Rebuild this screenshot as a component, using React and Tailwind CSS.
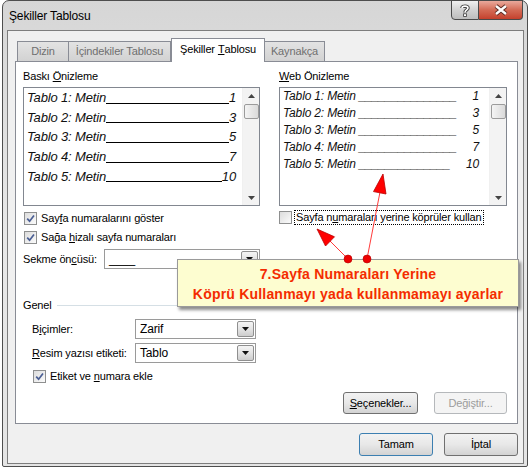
import React from 'react';

const Check = ({ checked }) => (
  <span className="w-[13px] h-[13px] border border-[#8e8f8f] bg-white flex items-center justify-center shrink-0">
    <span className="w-[11px] h-[11px] bg-gradient-to-br from-[#dcdcdc] to-[#fbfbfb] flex items-center justify-center">
      {checked && (
        <svg width="9" height="9" viewBox="0 0 9 9">
          <path d="M1.2 4.6 L3.6 7.2 L8 1.4" stroke="#4b5f94" strokeWidth="1.7" fill="none" />
        </svg>
      )}
    </span>
  </span>
);

const Select = ({ value, className }) => (
  <div className={`h-[20px] border border-[#9a9a9a] bg-white flex items-stretch ${className}`}>
    <div className="flex-1 pl-[4px] flex items-center text-[12px] text-black">{value}</div>
    <div className="w-[17px] m-[1px] border border-[#8f8f8f] rounded-[2px] bg-gradient-to-b from-[#f4f4f4] via-[#e4e4e4] to-[#cdcdcd] flex items-center justify-center">
      <svg width="7" height="4" viewBox="0 0 7 4">
        <path d="M0 0 H7 L3.5 4 Z" fill="#111" />
      </svg>
    </div>
  </div>
);

const ScrollBar = () => (
  <div className="w-[17px] bg-[#f3f3f3] border-l border-[#f0f0f0] flex flex-col items-center">
    <div className="h-[15px] w-full flex items-center justify-center">
      <svg width="7" height="4" viewBox="0 0 7 4">
        <path d="M0 4 H7 L3.5 0 Z" fill="#444" />
      </svg>
    </div>
    <div className="w-[15px] h-[15px] mt-[1px] border border-[#9b9b9b] rounded-[2px] bg-gradient-to-r from-[#f4f4f4] to-[#dadada]" />
    <div className="flex-1" />
    <div className="h-[15px] w-full flex items-center justify-center">
      <svg width="7" height="4" viewBox="0 0 7 4">
        <path d="M0 0 H7 L3.5 4 Z" fill="#444" />
      </svg>
    </div>
  </div>
);

const Btn = ({ children, className = '', disabled, primary }) => (
  <div
    className={`h-[22px] rounded-[3px] border flex items-center justify-center text-[11px] ${
      disabled
        ? 'border-[#b5b8bb] bg-[#f4f4f4] text-[#9c9c9c]'
        : primary
        ? 'border-[#3c7fb1] bg-gradient-to-b from-[#f2f2f2] via-[#e8e8e8] to-[#d3d3d3] text-black'
        : 'border-[#707070] bg-gradient-to-b from-[#f2f2f2] via-[#e8e8e8] to-[#d3d3d3] text-black'
    } ${className}`}
  >
    {children}
  </div>
);

const printRows = [
  ['Tablo 1: Metin', '1'],
  ['Tablo 2: Metin', '3'],
  ['Tablo 3: Metin', '5'],
  ['Tablo 4: Metin', '7'],
  ['Tablo 5: Metin', '10'],
];

const webRows = [
  ['Tablo 1: Metin _______________', '1'],
  ['Tablo 2: Metin _______________', '3'],
  ['Tablo 3: Metin _______________', '5'],
  ['Tablo 4: Metin _______________', '7'],
  ['Tablo 5: Metin ______________', '10'],
];

const Tab = ({ children, className = '' }) => (
  <div className={`h-[20px] border border-b-0 border-[#898c95] bg-gradient-to-b from-[#e3e3e3] to-[#d2d2d2] text-[#6f6f6f] text-[11px] flex items-center justify-center ${className}`}>
    {children}
  </div>
);

export default function App() {
  return (
    <div className="w-[530px] h-[470px] relative bg-white overflow-hidden pl-[2px] font-['Liberation_Sans',Arial,sans-serif] tracking-[-0.15px] text-black">
      {/* window */}
      <div className="w-[526px] h-[467px] border border-[#4e4e4e] rounded-t-[7px] rounded-b-[2px] bg-gradient-to-b from-[#d6d6d6] via-[#e8e8e8] to-[#e4e4e4] flex flex-col">
        {/* title bar */}
        <div className="h-[29px] flex items-start">
          <div className="pl-[6px] pt-[8px] text-[12px] leading-[14px] text-black">Şekiller Tablosu</div>
          <div className="flex-1" />
          <div className="flex -mt-px mr-[4px]">
            <div className="w-[28px] h-[20px] border border-[#4a4a4a] rounded-bl-[4px] bg-gradient-to-b from-[#f0f0f0] via-[#d2d2d2] to-[#bdbdbd] flex items-center justify-center">
              <svg width="12" height="13" viewBox="0 0 12 13">
                <path d="M3 4 C3 1.5 9 1.5 9 4 C9 6 6 6 6 8.5" stroke="#3a3a3a" strokeWidth="3.4" fill="none" />
                <path d="M3 4 C3 1.5 9 1.5 9 4 C9 6 6 6 6 8.5" stroke="#fff" strokeWidth="1.6" fill="none" />
                <rect x="4.6" y="9.8" width="2.8" height="2.6" fill="#fff" stroke="#3a3a3a" strokeWidth="0.8" />
              </svg>
            </div>
            <div className="w-[44px] h-[20px] border border-l-0 border-[#4a4a4a] rounded-br-[4px] bg-gradient-to-b from-[#e9a99c] via-[#d36a55] to-[#c4402c] flex items-center justify-center">
              <svg width="16" height="12" viewBox="0 0 16 12">
                <path d="M3 2 L13 10 M13 2 L3 10" stroke="#5a2a22" strokeWidth="4.2" />
                <path d="M3 2 L13 10 M13 2 L3 10" stroke="#fff" strokeWidth="2.4" />
              </svg>
            </div>
          </div>
        </div>

        {/* content */}
        <div className="ml-[4px] w-[517px] h-[434px] border border-[#7d7d7d] bg-[#f0f0f0] pt-[7px] pl-[7px]">
          <div className="relative z-10 flex items-end h-[23px] pl-[2px]">
            <Tab className="w-[52px]">Dizin</Tab>
            <Tab className="w-[102px] border-l-0">İçindekiler Tablosu</Tab>
            <div className="w-[94px] h-[24px] -mb-px border border-b-0 border-[#898c95] bg-white text-[11px] flex items-center justify-center pb-[2px]">
              Şekiller <span className="underline ml-[3px]">T</span>ablosu
            </div>
            <Tab className="w-[60px] border-l-0">Kaynakça</Tab>
          </div>

          {/* panel */}
          <div className="w-[503px] h-[363px] border border-[#898c95] bg-white flex flex-col text-[11px]">
            <div className="flex pl-[7px]">
              {/* left column */}
              <div className="w-[237px] flex flex-col">
                <div className="mt-[7px] h-[14px] leading-[14px]">
                  Baskı <span className="underline">Ö</span>nizleme
                </div>
                <div className="mt-[4px] h-[119px] border border-[#828790] flex">
                  <div className="flex-1 pl-[3px] pr-[6px] font-['Liberation_Sans',Arial,sans-serif] italic text-[13px] text-[#111]">
                    {printRows.map(([t, n]) => (
                      <div key={t} className="h-[19.7px] leading-[20px] flex">
                        <span>{t}</span>
                        <span className="flex-1 h-px bg-black self-end mb-[4px]" />
                        <span>{n}</span>
                      </div>
                    ))}
                  </div>
                  <ScrollBar />
                </div>
                <div className="mt-[5px] h-[14px] flex items-center ml-[1px]">
                  <Check checked />
                  <span className="ml-[4px]">Say<span className="underline">f</span>a numaralarını göster</span>
                </div>
                <div className="mt-[5px] h-[14px] flex items-center ml-[1px]">
                  <Check checked />
                  <span className="ml-[4px]">Sağa <span className="underline">h</span>izalı sayfa numaraları</span>
                </div>
                <div className="mt-[5px] h-[20px] flex items-center">
                  <span className="w-[81px]">Sekme ön<span className="underline">c</span>üsü:</span>
                  <Select className="w-[156px]" value={<span className="leading-none">____</span>} />
                </div>
              </div>

              {/* right column */}
              <div className="w-[228px] ml-[19px] flex flex-col">
                <div className="mt-[7px] h-[14px] leading-[14px]">
                  <span className="underline">W</span>eb Önizleme
                </div>
                <div className="mt-[4px] h-[119px] border border-[#828790] flex">
                  <div className="flex-1 pl-[3px] pr-[10px] italic text-[12px] text-[#111]">
                    {webRows.map(([t, n]) => (
                      <div key={t} className="h-[17px] leading-[17px] flex">
                        <span className="whitespace-pre">{t}</span>
                        <span className="flex-1" />
                        <span>{n}</span>
                      </div>
                    ))}
                  </div>
                  <ScrollBar />
                </div>
                <div className="mt-[4px] h-[15px] flex items-center">
                  <Check />
                  <span className="ml-[2px] h-[15px] px-px leading-[13px] border border-dotted border-black">
                    Sayfa n<span className="underline">u</span>maraları yerine köprüler kullan
                  </span>
                </div>
              </div>
            </div>

            {/* Genel group */}
            <div className="mt-[29px] h-[14px] flex items-center pl-[7px] pr-[9px]">
              <span>Genel</span>
              <span className="flex-1 h-px bg-[#d5dfe5] ml-[5px]" />
            </div>
            <div className="mt-[7px] h-[20px] flex items-center pl-[16px]">
              <span className="w-[103px]">B<span className="underline">i</span>çimler:</span>
              <Select className="w-[121px]" value="Zarif" />
            </div>
            <div className="mt-[4px] h-[20px] flex items-center pl-[16px]">
              <span className="w-[103px]"><span className="underline">R</span>esim yazısı etiketi:</span>
              <Select className="w-[121px]" value="Tablo" />
            </div>
            <div className="mt-[6px] h-[14px] flex items-center pl-[17px]">
              <Check checked />
              <span className="ml-[4px]">Etiket ve <span className="underline">n</span>umara ekle</span>
            </div>
            <div className="mt-[9px] flex justify-end pr-[10px] gap-[16px]">
              <Btn className="w-[75px]"><span className="underline">S</span>eçenekler...</Btn>
              <Btn className="w-[73px]" disabled>Değiştir...</Btn>
            </div>
          </div>

          {/* dialog buttons */}
          <div className="mt-[9px] flex justify-end pr-[5px] gap-[11px]">
            <Btn className="w-[74px] h-[23px]" primary>Tamam</Btn>
            <Btn className="w-[74px] h-[23px]">İptal</Btn>
          </div>
        </div>
      </div>

      {/* callout */}
      <div className="absolute left-[177px] top-[259px] w-[342px] h-[48px] border border-[#9a9a9a] bg-[#fdfdd0] shadow-[2px_3px_3px_rgba(0,0,0,0.45)] flex flex-col items-center pt-[4px] text-[14px] leading-[20px] font-bold text-[#f42c00] tracking-[0.2px]">
        <div>7.Sayfa Numaraları Yerine</div>
        <div>Köprü Kullanmayı yada kullanmamayı ayarlar</div>
      </div>

      {/* arrows */}
      <svg className="absolute left-0 top-0 pointer-events-none" width="530" height="470" viewBox="0 0 530 470">
        <line x1="367" y1="259" x2="380" y2="192" stroke="#ff3b3b" strokeWidth="1" />
        <polygon points="383,174 386,194 373.5,191.6" fill="#ff0000" stroke="#b80000" strokeWidth="0.8" />
        <line x1="348" y1="259" x2="330" y2="241" stroke="#ff3b3b" strokeWidth="1" />
        <polygon points="317,229 334.5,236.8 325.5,246" fill="#ff0000" stroke="#b80000" strokeWidth="0.8" />
        <circle cx="348" cy="259" r="4" fill="#ee0000" stroke="#b00000" strokeWidth="0.6" />
        <circle cx="367" cy="259" r="4" fill="#ee0000" stroke="#b00000" strokeWidth="0.6" />
      </svg>
    </div>
  );
}
